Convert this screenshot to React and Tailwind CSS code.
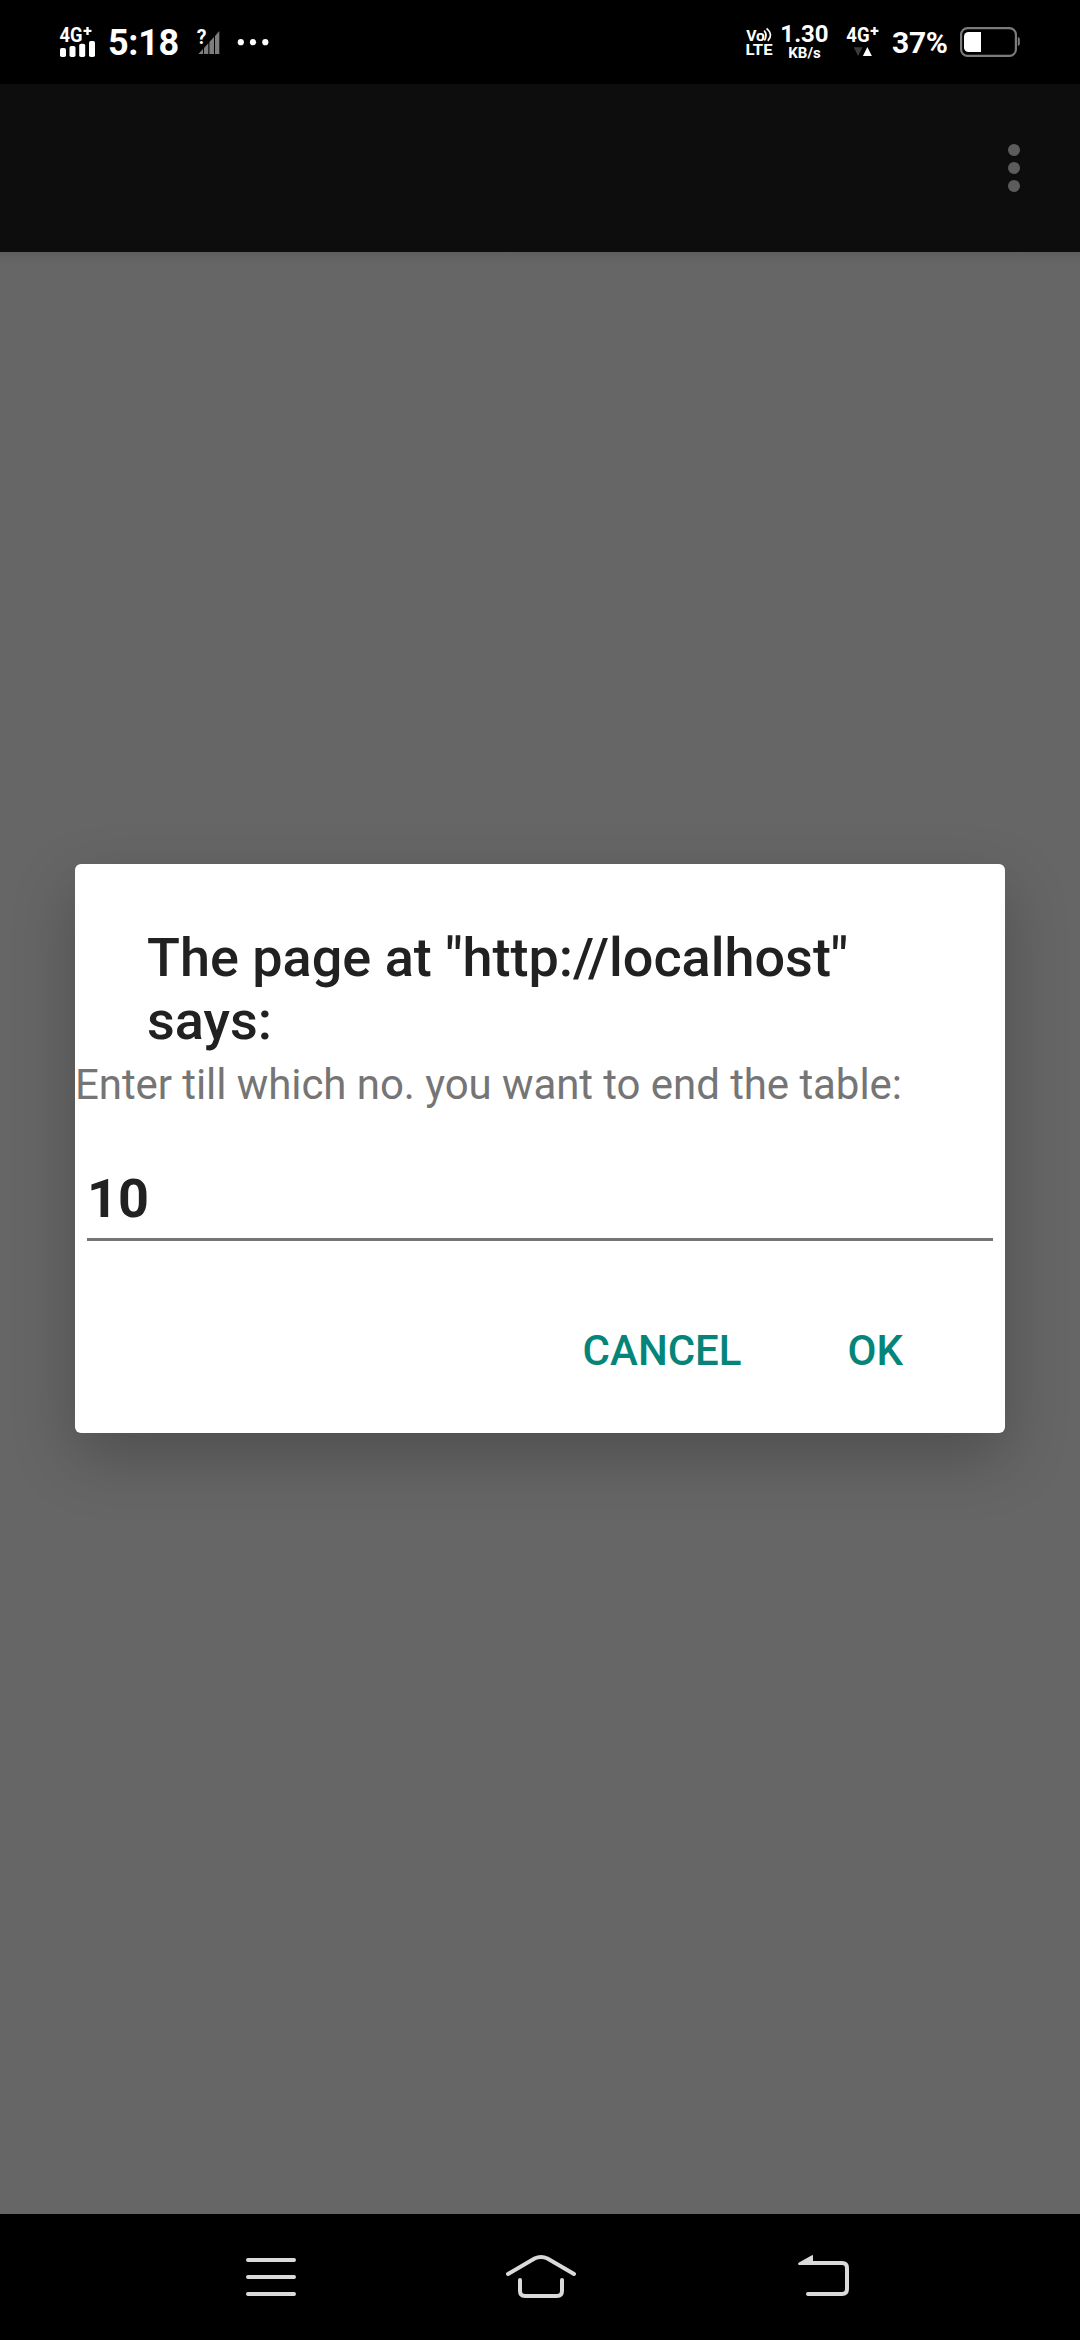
const FONT = 'Roboto, "Noto Sans", sans-serif';

function MobileSignal() {
  return (
    <svg className="block h-[84px] w-[50px] shrink-0" viewBox="50 0 50 84" fill="#fff" fontFamily={FONT}>
      <text x="59.6" y="41.6" fontSize="19.7" fontWeight="700" textLength="23" lengthAdjust="spacingAndGlyphs">4G</text>
      <path d="M83.5 30.9h8M87.5 26.9v8" stroke="#fff" strokeWidth="2.4" />
      <rect x="60" y="48" width="6" height="9" rx="1.8" />
      <rect x="69.5" y="46" width="6" height="11" rx="1.8" />
      <rect x="79.2" y="43.7" width="6" height="13.3" rx="1.8" />
      <rect x="89" y="41" width="6" height="16" rx="1.8" />
    </svg>
  );
}

function UnknownSignal() {
  return (
    <svg className="block h-[84px] w-[30px] shrink-0" viewBox="194 0 30 84" fontFamily={FONT}>
      <path
        fill="#7d7d7d"
        d="M198.3 54L203 49V54ZM204 54V48L208.3 43.2V54ZM209.4 54V42L214 37V54ZM215 54V36L219.3 31V54Z"
      />
      <text x="196.7" y="44" fontSize="19.5" fontWeight="700" fill="#fff" stroke="#000" strokeWidth="2" paintOrder="stroke">?</text>
    </svg>
  );
}

function VoLte() {
  return (
    <svg className="block h-[84px] w-[32px] shrink-0" viewBox="744 0 32 84" fill="#fff" fontFamily={FONT}>
      <text x="746.2" y="40.6" fontSize="14.5" fontWeight="700" textLength="18.8" lengthAdjust="spacingAndGlyphs">Vo</text>
      <text x="745.6" y="55" fontSize="15" fontWeight="700" textLength="27" lengthAdjust="spacingAndGlyphs">LTE</text>
      <path
        d="M764.2 30.6Q767.8 35.5 764.4 40.5M766.6 28.4Q773.8 34.6 767.8 40.8"
        fill="none"
        stroke="#fff"
        strokeWidth="1.7"
      />
    </svg>
  );
}

function DataActivity() {
  return (
    <svg className="block h-[84px] w-[40px] shrink-0" viewBox="842 0 40 84" fill="#fff" fontFamily={FONT}>
      <text x="846.3" y="41.6" fontSize="19.7" fontWeight="700" textLength="23.3" lengthAdjust="spacingAndGlyphs">4G</text>
      <path d="M870.5 30.9h8M874.5 26.9v8" stroke="#fff" strokeWidth="2.4" />
      <path d="M853.7 47.3h8.8L858.1 56z" fill="#3b3b3b" />
      <path d="M862.9 56h9L867.4 47z" />
    </svg>
  );
}

function Battery() {
  return (
    <svg className="block h-[84px] w-[64px] shrink-0" viewBox="958 0 64 84">
      <rect x="961.1" y="28.1" width="54.8" height="27.8" rx="6.5" fill="none" stroke="#7b7b7b" strokeWidth="2.2" />
      <path d="M981 32v20h-12.5a4.5 4.5 0 0 1-4.5-4.5v-11a4.5 4.5 0 0 1 4.5-4.5z" fill="#fff" />
      <path d="M1017.8 37q2 .4 2 2v5q0 1.600-2 2z" fill="#7b7b7b" />
    </svg>
  );
}

function StatusBar() {
  return (
    <header className="flex h-[84px] items-center justify-between bg-black pl-[50px] pr-[58px] text-white">
      <div className="flex items-center">
        <MobileSignal />
        <span className="ml-[8px] mt-[2px] w-[86px] text-[36px] font-bold leading-[42px] tracking-[-0.3px]">5:18</span>
        <UnknownSignal />
        <svg className="ml-[12px] block h-[84px] w-[36px]" viewBox="236 0 36 84" fill="#fff">
          <circle cx="240.8" cy="42.2" r="3.1" />
          <circle cx="253" cy="42.2" r="3.1" />
          <circle cx="265.3" cy="42.2" r="3.1" />
        </svg>
      </div>
      <div className="flex items-center">
        <VoLte />
        <div className="ml-[2px] flex w-[53px] flex-col items-center pb-[1px] font-bold">
          <span className="text-[24px] leading-[24px]">1.30</span>
          <span className="-mt-[1px] text-[15px] leading-[16px]">KB/s</span>
        </div>
        <span className="w-[11px]" />
        <DataActivity />
        <span className="ml-[10px] mt-[2px] w-[66px] whitespace-nowrap text-[30px] font-bold leading-[36px] tracking-[-0.3px]">37%</span>
        <Battery />
      </div>
    </header>
  );
}

function AppBar() {
  return (
    <div className="flex h-[168px] items-center justify-end bg-[#0d0d0d] pr-[60px]">
      <button className="flex flex-col gap-[6px]" aria-label="More options">
        <span className="size-[12px] rounded-full bg-[#5c5c5c]" />
        <span className="size-[12px] rounded-full bg-[#5c5c5c]" />
        <span className="size-[12px] rounded-full bg-[#5c5c5c]" />
      </button>
    </div>
  );
}

function PromptDialog() {
  return (
    <section className="flex h-[569px] w-[930px] flex-col rounded-[6px] bg-white shadow-[0_24px_64px_rgba(0,0,0,0.24)]">
      <h1 className="mt-[62px] px-[72px] text-[54px] font-medium leading-[63px] text-[#212121]">
        The page at "http://localhost" says:
      </h1>
      <p className="mt-[8px] whitespace-nowrap text-[42px] leading-[49px] tracking-[-0.07px] text-[#757575]">
        Enter till which no. you want to end the table:
      </p>
      <div className="mx-[12px] mt-[58px] h-[74px] border-b-[3px] border-[#757575] text-[54px] font-bold leading-[63px] text-[#212121]">
        10
      </div>
      <div className="mt-[85px] flex justify-end pr-[102px] text-[42px] font-medium leading-[49px] text-[#05857a]">
        <button className="mr-[106px]">CANCEL</button>
        <button>OK</button>
      </div>
    </section>
  );
}

function NavBar() {
  return (
    <nav className="flex h-[126px] items-center bg-black pl-[240px]">
      <svg className="block h-[126px] w-[62px]" viewBox="240 2214 62 126" stroke="#dadada" strokeWidth="4" strokeLinecap="round">
        <path d="M248 2260H294M248 2277H294M248 2294H294" />
      </svg>
      <svg className="ml-[198px] block h-[126px] w-[82px]" viewBox="500 2214 82 126" fill="none" stroke="#dadada" strokeWidth="4" strokeLinecap="round">
        <path d="M508 2274L534.5 2258.500Q541 2255.500 547.5 2258.500L574 2274" />
        <path d="M520 2280V2291Q520 2296 525 2296H557Q562 2296 562 2291V2280" />
      </svg>
      <svg className="ml-[208px] block h-[126px] w-[66px]" viewBox="790 2214 66 126" fill="none" stroke="#dadada" strokeWidth="4" strokeLinecap="round">
        <path d="M804 2263H842Q847 2263 847 2268V2289Q847 2294 842 2294H808" />
        <path d="M799 2265Q797 2264 799 2262.5L812 2255.2Q813 2254.8 813 2256V2265Z" fill="#dadada" stroke="none" />
      </svg>
    </nav>
  );
}

export default function App() {
  return (
    <div className="flex h-[2340px] w-[1080px] flex-col overflow-hidden bg-[#666666] font-['Roboto',sans-serif]">
      <StatusBar />
      <AppBar />
      <main className="flex flex-1 flex-col items-center bg-[#666666]">
        <div className="h-[12px] w-full bg-linear-to-b from-[#5e5e5e] to-[#666666]" />
        <div className="mt-[600px]">
          <PromptDialog />
        </div>
      </main>
      <NavBar />
    </div>
  );
}
